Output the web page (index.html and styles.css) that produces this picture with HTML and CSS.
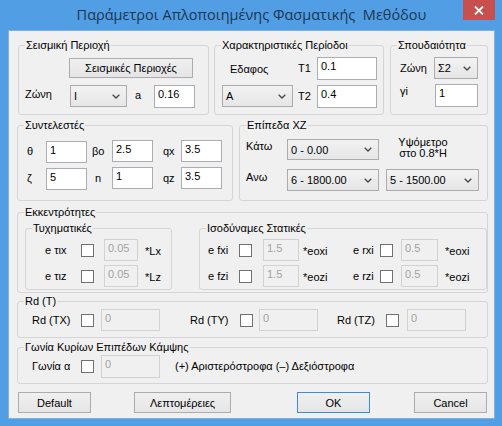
FILE: index.html
```html
<!DOCTYPE html>
<html lang="el">
<head>
<meta charset="utf-8">
<title>Παράμετροι Απλοποιημένης Φασματικής Μεθόδου</title>
<link rel="stylesheet" href="styles.css">
</head>
<body>
<div class="window">
  <div class="titlebar">
    <div></div>
    <div class="title">Παράμετροι Απλοποιημένης Φασματικής&nbsp; Μεθόδου</div>
    <div class="tb-right">
      <div class="close"><svg width="10" height="9" viewBox="0 0 10 9"><path d="M1 0.5 L9 8.5 M9 0.5 L1 8.5" stroke="#fff" stroke-width="1.8" fill="none"/></svg></div>
    </div>
  </div>
  <div class="client">
    <div class="row row1">
      <fieldset class="g g-region">
        <legend>Σεισμική Περιοχή</legend>
        <div class="btn btn-region">Σεισμικές Περιοχές</div>
        <div class="line l-region">
          <span class="lbl lbl-zone1">Ζώνη</span>
          <div class="combo w57"><span>I</span><svg class="chev" width="8" height="5" viewBox="0 0 8 5"><path d="M0.7 0.7 L4 4 L7.3 0.7" stroke="#4a4a4a" stroke-width="1.4" fill="none"/></svg></div>
          <span class="lbl lbl-a">a</span>
          <div class="tb w41 h23">0.16</div>
        </div>
      </fieldset>
      <fieldset class="g g-period">
        <legend>Χαρακτηριστικές Περίοδοι</legend>
        <div class="line l-p1">
          <span class="lbl lbl-soil">Εδαφος</span>
          <span class="lbl lbl-t">T1</span>
          <div class="tb w60 h23">0.1</div>
        </div>
        <div class="line l-p2">
          <div class="combo w71 combo-soil"><span>A</span><svg class="chev" width="8" height="5" viewBox="0 0 8 5"><path d="M0.7 0.7 L4 4 L7.3 0.7" stroke="#4a4a4a" stroke-width="1.4" fill="none"/></svg></div>
          <span class="lbl lbl-t lbl-t2">T2</span>
          <div class="tb w60 h23">0.4</div>
        </div>
      </fieldset>
      <fieldset class="g g-imp">
        <legend>Σπουδαιότητα</legend>
        <div class="line l-p1">
          <span class="lbl lbl-zone3">Ζώνη</span>
          <div class="combo w44"><span>Σ2</span><svg class="chev" width="8" height="5" viewBox="0 0 8 5"><path d="M0.7 0.7 L4 4 L7.3 0.7" stroke="#4a4a4a" stroke-width="1.4" fill="none"/></svg></div>
        </div>
        <div class="line l-p2">
          <span class="lbl lbl-gi">γi</span>
          <div class="tb w43 h23">1</div>
        </div>
      </fieldset>
    </div>

    <div class="row row2">
      <fieldset class="g g-coef">
        <legend>Συντελεστές</legend>
        <div class="line l-c1">
          <span class="lbl lbl-c1">θ</span>
          <div class="tb w41 h22 first-col">1</div>
          <span class="lbl lbl-c2">βo</span>
          <div class="tb w41 h22">2.5</div>
          <span class="lbl lbl-c3">qx</span>
          <div class="tb w41 h22">3.5</div>
        </div>
        <div class="line l-c2">
          <span class="lbl lbl-c1">ζ</span>
          <div class="tb w41 h22 first-col">5</div>
          <span class="lbl lbl-c2 lbl-n">n</span>
          <div class="tb w41 h22">1</div>
          <span class="lbl lbl-c3">qz</span>
          <div class="tb w41 h22">3.5</div>
        </div>
      </fieldset>
      <fieldset class="g g-levels">
        <legend>Επίπεδα XZ</legend>
        <div class="line l-x1">
          <span class="lbl lbl-lv lbl-down">Κάτω</span>
          <div class="combo w92 h21"><span>0 - 0.00</span><svg class="chev" width="8" height="5" viewBox="0 0 8 5"><path d="M0.7 0.7 L4 4 L7.3 0.7" stroke="#4a4a4a" stroke-width="1.4" fill="none"/></svg></div>
          <div class="height-note">Υψόμετρο<br>στο 0.8*H</div>
        </div>
        <div class="line l-x2">
          <span class="lbl lbl-lv lbl-up">Ανω</span>
          <div class="combo w92"><span>6 - 1800.00</span><svg class="chev" width="8" height="5" viewBox="0 0 8 5"><path d="M0.7 0.7 L4 4 L7.3 0.7" stroke="#4a4a4a" stroke-width="1.4" fill="none"/></svg></div>
          <div class="combo w93 combo-h"><span>5 - 1500.00</span><svg class="chev" width="8" height="5" viewBox="0 0 8 5"><path d="M0.7 0.7 L4 4 L7.3 0.7" stroke="#4a4a4a" stroke-width="1.4" fill="none"/></svg></div>
        </div>
      </fieldset>
    </div>

    <fieldset class="g g-ecc">
      <legend>Εκκεντρότητες</legend>
      <div class="ecc-inner">
        <fieldset class="g g-acc">
          <legend>Τυχηματικές</legend>
          <div class="line l-e1">
            <span class="lbl lbl-acc">e τιx</span>
            <span class="chk"></span>
            <div class="tb dis w34 h22 tb-acc">0.05</div>
            <span class="lbl unit unit-acc">*Lx</span>
          </div>
          <div class="line l-e2">
            <span class="lbl lbl-acc">e τιz</span>
            <span class="chk"></span>
            <div class="tb dis w34 h22 tb-acc">0.05</div>
            <span class="lbl unit unit-acc">*Lz</span>
          </div>
        </fieldset>
        <fieldset class="g g-eq">
          <legend>Ισοδύναμες Στατικές</legend>
          <div class="line l-e1">
            <span class="lbl lbl-f">e fxi</span>
            <span class="chk"></span>
            <div class="tb dis w36 h22 tb-f">1.5</div>
            <span class="lbl unit unit-f">*eoxi</span>
            <span class="lbl lbl-r">e rxi</span>
            <span class="chk"></span>
            <div class="tb dis w37 h22 tb-r">0.5</div>
            <span class="lbl unit unit-r">*eoxi</span>
          </div>
          <div class="line l-e2">
            <span class="lbl lbl-f">e fzi</span>
            <span class="chk"></span>
            <div class="tb dis w36 h22 tb-f">1.5</div>
            <span class="lbl unit unit-f">*eozi</span>
            <span class="lbl lbl-r">e rzi</span>
            <span class="chk"></span>
            <div class="tb dis w37 h22 tb-r">0.5</div>
            <span class="lbl unit unit-r">*eozi</span>
          </div>
        </fieldset>
      </div>
    </fieldset>

    <fieldset class="g g-rd">
      <legend>Rd (T)</legend>
      <div class="line l-single">
        <span class="lbl lbl-rdx">Rd (TX)</span>
        <span class="chk"></span>
        <div class="tb dis w59 h22 tb-rd">0</div>
        <span class="lbl lbl-rdy">Rd (TY)</span>
        <span class="chk"></span>
        <div class="tb dis w59 h22 tb-rdy">0</div>
        <span class="lbl lbl-rdz">Rd (TZ)</span>
        <span class="chk"></span>
        <div class="tb dis w59 h22 tb-rdz">0</div>
      </div>
    </fieldset>

    <fieldset class="g g-angle">
      <legend>Γωνία Κυρίων Επιπέδων Κάμψης</legend>
      <div class="line l-single">
        <span class="lbl lbl-rdx">Γωνία α</span>
        <span class="chk"></span>
        <div class="tb dis w59 h23 tb-rd">0</div>
        <span class="lbl lbl-dir">(+) Αριστερόστροφα (–) Δεξιόστροφα</span>
      </div>
    </fieldset>

    <div class="buttons">
      <div class="btn b-default">Default</div>
      <div class="btn b-details">Λεπτομέρειες</div>
      <div class="btn b-ok">OK</div>
      <div class="btn b-cancel">Cancel</div>
    </div>
  </div>
</div>
</body>
</html>
```
FILE: styles.css
```css
html, body {
  margin: 0;
  padding: 0;
}
body {
  font-family: "Liberation Sans", Arial, sans-serif;
  font-size: 11px;
  color: #000;
}
.window {
  width: 502px;
  height: 426px;
  box-sizing: border-box;
  background: #519ee5;
  padding: 0 7px 7px 8px;
  display: flex;
  flex-direction: column;
}
.titlebar {
  height: 30px;
  flex: none;
  display: grid;
  grid-template-columns: 1fr auto 1fr;
}
.title {
  font-family: "Open Sans", "Noto Sans", sans-serif;
  font-size: 14.5px;
  line-height: 30px;
  color: #1c3650;
  white-space: nowrap;
}
.tb-right {
  display: flex;
  justify-content: flex-end;
}
.close {
  width: 32px;
  height: 20px;
  background: #c7504e;
  display: flex;
  align-items: center;
  justify-content: center;
}
.client {
  flex: 1;
  background: #f0f0f0;
  border: 1px solid #7fb0e0;
  padding: 8px 6px 0 8px;
  display: flex;
  flex-direction: column;
}

/* group boxes */
.g {
  margin: 0;
  padding: 0;
  border: 1px solid #d5d5d5;
  border-radius: 3px;
  min-width: 0;
  box-sizing: border-box;
}
.g legend {
  padding: 0 1px;
  margin-left: 6px;
  line-height: 13px;
}
.row {
  display: flex;
}
.line {
  display: flex;
  align-items: center;
}
.lbl {
  display: block;
  line-height: 13px;
  white-space: nowrap;
  box-sizing: border-box;
}

/* controls */
.tb {
  box-sizing: border-box;
  border: 1px solid #abadb3;
  background: #fff;
  padding: 2px 0 0 3px;
  line-height: 13px;
  white-space: nowrap;
}
.tb.dis {
  background: #f0f0f0;
  border-color: #d2d2d2;
  color: #a3a3a3;
}
.combo {
  box-sizing: border-box;
  height: 22px;
  border: 1px solid #acacac;
  background: linear-gradient(#f2f2f2, #e6e6e6);
  display: flex;
  align-items: center;
  justify-content: space-between;
  padding: 0 6px 0 3px;
  white-space: nowrap;
}
.chev {
  display: block;
  flex: none;
}
.chk {
  display: block;
  width: 13px;
  height: 13px;
  box-sizing: border-box;
  border: 1px solid #707070;
  background: #fff;
  flex: none;
}
.btn {
  box-sizing: border-box;
  height: 21px;
  border: 1px solid #acacac;
  background: linear-gradient(#f0f0f0, #e5e5e5);
  display: flex;
  align-items: center;
  justify-content: center;
  white-space: nowrap;
}

.w34 { width: 34px; }
.w36 { width: 36px; }
.w37 { width: 37px; }
.w41 { width: 41px; }
.w43 { width: 43px; }
.w44 { width: 44px; }
.w57 { width: 57px; }
.w59 { width: 59px; }
.w60 { width: 60px; }
.w71 { width: 71px; }
.w92 { width: 92px; }
.w93 { width: 93px; }
.h21 { height: 21px; }
.h22 { height: 22px; }
.h23 { height: 23px; }

/* row 1 */
.row1 {
  padding-left: 1px;
  height: 76px;
}
.g-region { width: 191px; height: 76px; }
.g-period { width: 170px; height: 76px; margin-left: 5px; }
.g-imp { width: 98px; height: 76px; margin-left: 6px; }

.btn-region {
  width: 124px;
  height: 20px;
  margin: 6px 0 0 50px;
}
.l-region { margin-top: 7px; align-items: flex-start; }
.lbl-zone1 { width: 51px; padding-left: 6px; margin-top: 3px; }
.lbl-a { width: 27px; padding-left: 8px; margin-top: 4px; }

.l-p1 { margin-top: 5px; align-items: flex-start; }
.l-p2 { margin-top: 5px; align-items: flex-start; }
.lbl-soil { width: 83px; padding-left: 15px; margin-top: 6px; }
.lbl-t { width: 19px; margin-top: 5px; }
.combo-soil { margin-left: 7px; }
.lbl-t2 { margin-left: 5px; margin-top: 5px; }
.lbl-zone3 { width: 43px; padding-left: 9px; margin-top: 5px; }
.lbl-gi { width: 44px; padding-left: 9px; margin-top: 1px; }

/* row 2 */
.row2 {
  margin-top: 4px;
  height: 82px;
}
.g-coef { width: 216px; height: 82px; }
.g-levels { width: 249px; height: 82px; margin-left: 6px; }

.l-c1 { margin-top: 8px; }
.l-c2 { margin-top: 5px; }
.first-col { position: relative; top: 1px; }
.lbl-c1 { width: 28px; padding-left: 9px; }
.lbl-c2 { width: 25px; padding-left: 5px; }
.lbl-n { padding-left: 8px; }
.lbl-c3 { width: 28px; padding-left: 10px; }

.l-x1 { margin-top: 7px; align-items: flex-start; }
.l-x2 { margin-top: 9px; align-items: flex-start; }
.lbl-lv { width: 47px; padding-left: 6px; }
.lbl-down { margin-top: 1px; }
.lbl-up { margin-top: 2px; }
.height-note {
  width: 74px;
  margin-left: 7px;
  margin-top: -2px;
  text-align: center;
  line-height: 11px;
}
.combo-h { margin-left: 7px; }

/* eccentricities */
.g-ecc {
  margin-top: 5px;
  height: 87px;
}
.ecc-inner {
  display: flex;
  margin-top: 3px;
  padding-left: 7px;
}
.g-acc { width: 147px; height: 68px; }
.g-eq { width: 288px; height: 68px; margin-left: 27px; }
.l-e1 { margin-top: 4px; }
.l-e2 { margin-top: 4px; }
.lbl-acc { width: 55px; padding-left: 19px; }
.tb-acc { margin-left: 10px; }
.unit { margin-top: 3px; }
.unit-acc { margin-left: 7px; }
.lbl-f { width: 39px; padding-left: 8px; }
.tb-f { margin-left: 11px; }
.unit-f { width: 54px; padding-left: 4px; }
.lbl-r { width: 27px; }
.tb-r { margin-left: 8px; }
.unit-r { margin-left: 7px; }

/* Rd (T) */
.g-rd {
  margin-top: 2px;
  height: 43px;
}
.l-single { margin-top: 1px; }
.lbl-rdx { width: 63px; padding-left: 14px; }
.tb-rd { margin-left: 7px; }
.lbl-rdy { width: 50px; margin-left: 30px; }
.tb-rdy { margin-left: 6px; }
.lbl-rdz { width: 49px; margin-left: 19px; }
.tb-rdz { margin-left: 8px; }

/* angle */
.g-angle {
  margin-top: 3px;
  height: 43px;
}
.lbl-dir { margin-left: 15px; }

/* buttons */
.buttons {
  display: flex;
  margin-top: 8px;
  padding-left: 1px;
}
.b-default { width: 73px; }
.b-details { width: 97px; margin-left: 43px; }
.b-ok { width: 73px; margin-left: 66px; border-color: #3c8be0; }
.b-cancel { width: 73px; margin-left: 44px; }
```
